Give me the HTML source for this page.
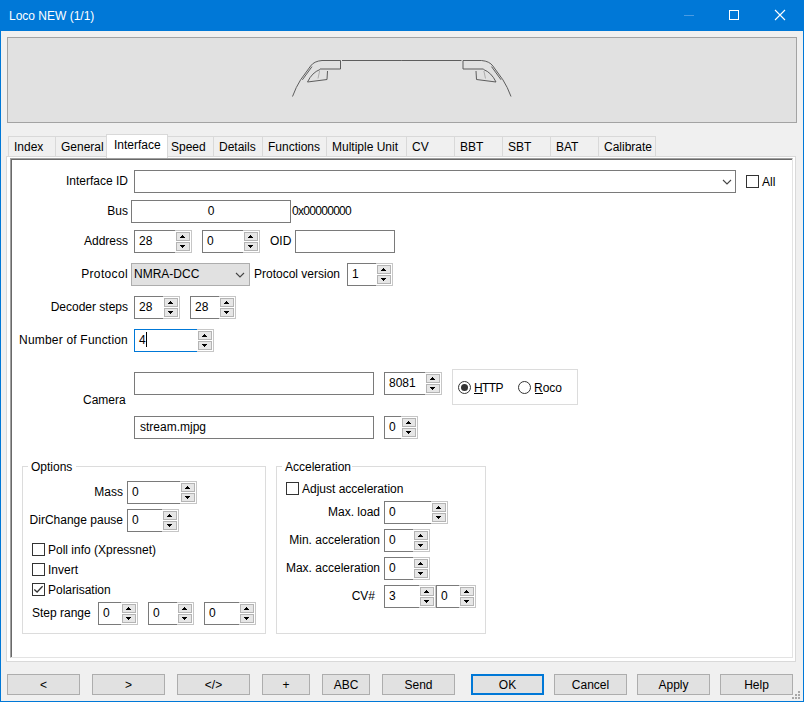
<!DOCTYPE html>
<html><head><meta charset="utf-8">
<style>
*{box-sizing:border-box}
html,body{margin:0;padding:0}
body{width:804px;height:702px;position:relative;overflow:hidden;background:#f0f0f0;font-family:"Liberation Sans",sans-serif;font-size:12px;color:#000}
.a{position:absolute}
.t{position:absolute;white-space:nowrap;line-height:15px}
.r{position:absolute;white-space:nowrap;line-height:15px;text-align:right;left:0}
#win{left:0;top:0;width:804px;height:702px;border:1px solid #0078d7;border-top:0}
#title{left:0;top:0;width:804px;height:31px;background:#0078d7}
.tab{position:absolute;top:136px;height:21px;background:#f0f0f0;border:1px solid #d9d9d9;border-bottom:0}
.tab span{position:absolute;left:5px;top:3px;line-height:15px;white-space:nowrap}
.tb{position:absolute;background:#fff;border:1px solid #7a7a7a}
.sp{position:absolute;height:23px}
.sp .x{position:absolute;left:0;top:0;height:23px;border:1px solid #7a7a7a;border-right:0;background:#fff;padding:3px 0 0 4px;line-height:15px;white-space:nowrap}
.sp .c{position:absolute;top:0;width:17px;height:23px;border:1px solid #c6c6c6;border-left:0;background:#fff}
.sp .u,.sp .d{position:absolute;left:1px;width:14px;height:9px;border:1px solid #b4b4b4;background:#e6e6e6}
.sp .u{top:1px}
.sp .d{top:11px}
.sp .u:after,.sp .d:after{content:"";position:absolute;left:5px;width:1px;height:1px;background:#000}
.sp .u:after{top:2px;box-shadow:-1px 1px #000,0 1px #000,1px 1px #000,-2px 2px #000,-1px 2px #000,0 2px #000,1px 2px #000,2px 2px #000}
.sp .d:after{top:4px;box-shadow:-1px -1px #000,0 -1px #000,1px -1px #000,-2px -2px #000,-1px -2px #000,0 -2px #000,1px -2px #000,2px -2px #000}
.cb{position:absolute;width:13px;height:13px;border:1px solid #333;background:#fff}
.grp{position:absolute;border:1px solid #dcdcdc}
.btn{position:absolute;top:674px;height:21px;border:1px solid #adadad;background:#e1e1e1;text-align:center;line-height:15px;padding-top:3px;white-space:nowrap}
</style></head><body>
<div id="title" class="a"></div>
<div class="t" style="left:9px;top:9px;color:#fff">Loco NEW (1/1)</div>
<div class="a" style="left:684px;top:15px;width:10px;height:1px;background:#4a9be3"></div>
<div class="a" style="left:729px;top:10px;width:10px;height:10px;border:1px solid #fff"></div>
<svg class="a" style="left:0;top:0" width="804" height="31"><path d="M775 10 L785 20 M785 10 L775 20" stroke="#fff" stroke-width="1.1" fill="none"/></svg>

<!-- image panel -->
<div class="a" style="left:7px;top:37px;width:790px;height:86px;background:#e1e1e1;border:1px solid #a3a3a3"></div>
<svg class="a" style="left:0;top:0" width="804" height="130">
<g fill="none" stroke="#555" stroke-width="0.95">
<path id="lh" d="M342 60.5 L401.75 60.5 M322 60.5 L340.5 60.5 L340.5 69 L320 69 M322 60.5 Q314 61.2 310.6 66 L300.6 79.8 Q296 87 292.5 96.5 M312 66.6 L302.4 79.8"/>
<path id="lw" d="M320 69.5 Q312 72.5 307.5 82 L327 79.5 L327.5 71"/>
<path id="ls" d="M319.6 71 L318 78.5" stroke="#aaa"/>
<use href="#lh" transform="translate(803.5 0) scale(-1 1)"/><use href="#lw" transform="translate(803.5 0) scale(-1 1)"/><use href="#ls" transform="translate(803.5 0) scale(-1 1)"/>
</g></svg>

<!-- tabs -->
<div class="tab" style="left:8px;width:48px"><span>Index</span></div>
<div class="tab" style="left:55px;width:54px"><span>General</span></div>
<div class="tab" style="left:165px;width:49px"><span>Speed</span></div>
<div class="tab" style="left:213px;width:50px"><span>Details</span></div>
<div class="tab" style="left:262px;width:65px"><span>Functions</span></div>
<div class="tab" style="left:326px;width:81px"><span>Multiple Unit</span></div>
<div class="tab" style="left:406px;width:49px"><span>CV</span></div>
<div class="tab" style="left:454px;width:49px"><span>BBT</span></div>
<div class="tab" style="left:502px;width:49px"><span>SBT</span></div>
<div class="tab" style="left:550px;width:49px"><span>BAT</span></div>
<div class="tab" style="left:598px;width:58px"><span>Calibrate</span></div>

<!-- page panel -->
<div class="a" style="left:6px;top:156px;width:790px;height:506px;background:#fff;border:1px solid #d9d9d9"></div>
<div class="tab" style="left:106px;top:134px;width:62px;height:24px;background:#fff"><span style="left:7px;top:3px">Interface</span></div>
<div class="a" style="left:10px;top:158px;width:783px;height:500px;border-style:solid;border-width:1px;border-color:#a0a0a0 #e3e3e3 #e3e3e3 #a0a0a0;box-shadow:inset 1px 1px #696969"></div>

<!-- FORM -->
<div class="r" style="width:128px;top:174px">Interface ID</div>
<div class="tb" style="left:134px;top:170px;width:602px;height:23px"></div>
<svg class="a" style="left:720px;top:176px" width="14" height="12"><path d="M3 4 L7 8 L11 4" stroke="#444" stroke-width="1.1" fill="none"/></svg>
<div class="cb" style="left:746px;top:175px"></div>
<div class="t" style="left:762px;top:175px">All</div>
<div class="r" style="width:128px;top:204px">Bus</div>
<div class="tb" style="left:131px;top:200px;width:160px;height:23px;text-align:center;line-height:15px;padding-top:3px">0</div>
<div class="t" style="left:292px;top:204px;letter-spacing:-0.7px">0x00000000</div>
<div class="r" style="width:128px;top:234px">Address</div>
<div class="sp" style="left:134px;top:230px;width:58px"><div class="x" style="width:41px">28</div><div class="c" style="left:41px"><i class="u"></i><i class="d"></i></div></div>
<div class="sp" style="left:202px;top:230px;width:58px"><div class="x" style="width:41px">0</div><div class="c" style="left:41px"><i class="u"></i><i class="d"></i></div></div>
<div class="t" style="left:270px;top:234px">OID</div>
<div class="tb" style="left:295px;top:230px;width:100px;height:23px"></div>
<div class="r" style="width:128px;top:267px;letter-spacing:0.35px">Protocol</div>
<div class="a" style="left:131px;top:263px;width:119px;height:23px;background:#e1e1e1;border:1px solid #adadad"></div>
<div class="t" style="left:134px;top:267px">NMRA-DCC</div>
<svg class="a" style="left:233px;top:269px" width="14" height="12"><path d="M3 4 L7 8 L11 4" stroke="#444" stroke-width="1.1" fill="none"/></svg>
<div class="t" style="left:254px;top:267px">Protocol version</div>
<div class="sp" style="left:347px;top:263px;width:46px"><div class="x" style="width:29px">1</div><div class="c" style="left:29px"><i class="u"></i><i class="d"></i></div></div>
<div class="r" style="width:128px;top:300px">Decoder steps</div>
<div class="sp" style="left:134px;top:296px;width:46px"><div class="x" style="width:29px">28</div><div class="c" style="left:29px"><i class="u"></i><i class="d"></i></div></div>
<div class="sp" style="left:190px;top:296px;width:46px"><div class="x" style="width:29px">28</div><div class="c" style="left:29px"><i class="u"></i><i class="d"></i></div></div>
<div class="r" style="width:128px;top:333px;letter-spacing:0.2px">Number of Function</div>
<div class="sp" style="left:134px;top:329px;width:80px"><div class="x" style="width:63px">4</div><div class="c" style="left:63px"><i class="u"></i><i class="d"></i></div></div>
<div class="t" style="left:83px;top:393px">Camera</div>
<div class="tb" style="left:134px;top:372px;width:240px;height:23px"></div>
<div class="sp" style="left:384px;top:372px;width:58px"><div class="x" style="width:41px">8081</div><div class="c" style="left:41px"><i class="u"></i><i class="d"></i></div></div>
<div class="grp" style="left:452px;top:369px;width:126px;height:36px"></div>
<div class="tb" style="left:134px;top:416px;width:240px;height:23px;line-height:15px;padding:3px 0 0 5px">stream.mjpg</div>
<div class="sp" style="left:384px;top:416px;width:34px"><div class="x" style="width:17px">0</div><div class="c" style="left:17px"><i class="u"></i><i class="d"></i></div></div>
<div class="grp" style="left:22px;top:466px;width:244px;height:168px"></div>
<div class="a" style="left:28px;top:460px;width:48px;height:12px;background:#fff"></div>
<div class="t" style="left:31px;top:460px">Options</div>
<div class="r" style="width:123px;top:485px">Mass</div>
<div class="sp" style="left:127px;top:481px;width:70px"><div class="x" style="width:53px">0</div><div class="c" style="left:53px"><i class="u"></i><i class="d"></i></div></div>
<div class="r" style="width:123px;top:513px">DirChange pause</div>
<div class="sp" style="left:127px;top:509px;width:52px"><div class="x" style="width:35px">0</div><div class="c" style="left:35px"><i class="u"></i><i class="d"></i></div></div>
<div class="cb" style="left:32px;top:543px"></div>
<div class="t" style="left:48px;top:543px">Poll info (Xpressnet)</div>
<div class="cb" style="left:32px;top:563px"></div>
<div class="t" style="left:48px;top:563px">Invert</div>
<div class="cb" style="left:32px;top:583px"></div>
<svg class="a" style="left:32px;top:583px" width="13" height="13"><path d="M2.3 6.4 L5.1 9 L10.6 3.3" stroke="#333" stroke-width="1.3" fill="none"/></svg>
<div class="t" style="left:48px;top:583px">Polarisation</div>
<div class="t" style="left:32px;top:606px">Step range</div>
<div class="sp" style="left:98px;top:602px;width:40px"><div class="x" style="width:23px">0</div><div class="c" style="left:23px"><i class="u"></i><i class="d"></i></div></div>
<div class="sp" style="left:148px;top:602px;width:46px"><div class="x" style="width:29px">0</div><div class="c" style="left:29px"><i class="u"></i><i class="d"></i></div></div>
<div class="sp" style="left:204px;top:602px;width:52px"><div class="x" style="width:35px">0</div><div class="c" style="left:35px"><i class="u"></i><i class="d"></i></div></div>
<div class="grp" style="left:276px;top:466px;width:210px;height:168px"></div>
<div class="a" style="left:282px;top:460px;width:70px;height:12px;background:#fff"></div>
<div class="t" style="left:285px;top:460px">Acceleration</div>
<div class="cb" style="left:286px;top:482px"></div>
<div class="t" style="left:302px;top:482px">Adjust acceleration</div>
<div class="r" style="width:380px;top:505px">Max. load</div>
<div class="sp" style="left:384px;top:501px;width:64px"><div class="x" style="width:47px">0</div><div class="c" style="left:47px"><i class="u"></i><i class="d"></i></div></div>
<div class="r" style="width:380px;top:533px">Min. acceleration</div>
<div class="sp" style="left:384px;top:529px;width:46px"><div class="x" style="width:29px">0</div><div class="c" style="left:29px"><i class="u"></i><i class="d"></i></div></div>
<div class="r" style="width:380px;top:561px">Max. acceleration</div>
<div class="sp" style="left:384px;top:557px;width:46px"><div class="x" style="width:29px">0</div><div class="c" style="left:29px"><i class="u"></i><i class="d"></i></div></div>
<div class="r" style="width:375px;top:589px">CV#</div>
<div class="sp" style="left:384px;top:585px;width:52px"><div class="x" style="width:35px">3</div><div class="c" style="left:35px"><i class="u"></i><i class="d"></i></div></div>
<div class="sp" style="left:436px;top:585px;width:40px"><div class="x" style="width:23px">0</div><div class="c" style="left:23px"><i class="u"></i><i class="d"></i></div></div>
<div class="btn" style="left:7px;width:73px">&lt;</div>
<div class="btn" style="left:92px;width:73px">&gt;</div>
<div class="btn" style="left:177px;width:73px">&lt;/&gt;</div>
<div class="btn" style="left:262px;width:48px">+</div>
<div class="btn" style="left:322px;width:48px">ABC</div>
<div class="btn" style="left:382px;width:73px">Send</div>
<div class="btn" style="left:471px;width:73px;border:2px solid #0078d7;padding-top:2px">OK</div>
<div class="btn" style="left:554px;width:73px">Cancel</div>
<div class="btn" style="left:637px;width:73px">Apply</div>
<div class="btn" style="left:720px;width:73px">Help</div>
<div class="a" style="left:798px;top:691px;width:2px;height:2px;background:#a8a8a8"></div><div class="a" style="left:795px;top:694px;width:2px;height:2px;background:#a8a8a8"></div><div class="a" style="left:798px;top:694px;width:2px;height:2px;background:#a8a8a8"></div><div class="a" style="left:792px;top:697px;width:2px;height:2px;background:#a8a8a8"></div><div class="a" style="left:795px;top:697px;width:2px;height:2px;background:#a8a8a8"></div><div class="a" style="left:798px;top:697px;width:2px;height:2px;background:#a8a8a8"></div>
<!-- radios -->
<svg class="a" style="left:457px;top:380px" width="16" height="16"><circle cx="7.5" cy="7.5" r="6" stroke="#333" stroke-width="1" fill="#fff"/><circle cx="7.5" cy="7.5" r="3.5" fill="#333"/></svg>
<div class="t" style="left:474px;top:381px;letter-spacing:-0.6px">HTTP</div>
<div class="a" style="left:474px;top:393px;width:9px;height:1px;background:#000"></div>
<svg class="a" style="left:517px;top:380px" width="16" height="16"><circle cx="7.5" cy="7.5" r="6" stroke="#333" stroke-width="1" fill="#fff"/></svg>
<div class="t" style="left:534px;top:381px">Roco</div>
<div class="a" style="left:535px;top:393px;width:8px;height:1px;background:#000"></div>
<div class="a" style="left:134px;top:329px;width:63px;height:23px;border:1px solid #0078d7;border-right:0"></div>
<div class="a" style="left:146px;top:332px;width:1px;height:15px;background:#000"></div>
<div id="win" class="a"></div>
</body></html>
